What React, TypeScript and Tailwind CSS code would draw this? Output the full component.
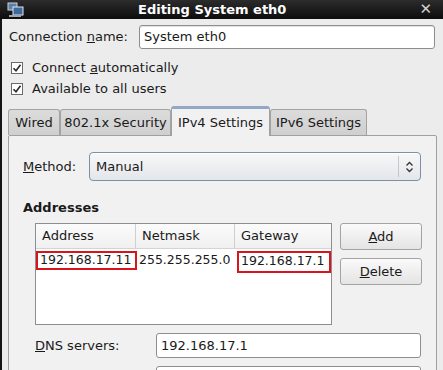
const font = { fontFamily: '"DejaVu Sans", "Liberation Sans", sans-serif' };

function Check({ label }: { label: React.ReactNode }) {
  return (
    <div className="flex items-center h-[21px] pl-[9px]">
      <svg width="12" height="12" viewBox="0 0 12 12" className="mr-[9px]">
        <rect x="0.5" y="0.5" width="11" height="11" fill="#fff" stroke="#6b6b6b" />
        <path d="M2.5 6.2 L5 8.8 L9.5 2.8" fill="none" stroke="#2a2a2a" strokeWidth="1.6" />
      </svg>
      <span>{label}</span>
    </div>
  );
}

function Tab({ label, active, w }: { label: string; active?: boolean; w: string }) {
  if (active) {
    return (
      <div className={`${w} h-[30px] -mb-px relative z-10 flex items-center justify-center bg-[#f1f1f1] border border-b-0 border-[#a0a0a0] rounded-t-[3px] border-t-[3px] border-t-[#93a8c6]`}>
        {label}
      </div>
    );
  }
  return (
    <div className={`${w} h-[26px] flex items-center justify-center bg-gradient-to-b from-[#dcdcdc] to-[#cfcfcf] border border-b-0 border-[#a3a3a3] rounded-t-[3px]`}>
      {label}
    </div>
  );
}

export default function App() {
  return (
    <div className="w-[443px] h-[370px] overflow-hidden bg-[#ececec] text-[13px] text-[#1a1a1a] flex flex-col" style={font}>
      {/* title bar */}
      <div className="h-[19px] shrink-0 bg-gradient-to-b from-[#2c2c2c] to-[#0d0d0d] flex items-center relative">
        <svg width="18" height="16" viewBox="0 0 18 16" className="ml-[7px]">
          <rect x="1" y="1" width="9" height="7" fill="#5d7fa6" stroke="#c9d3de" />
          <rect x="6" y="5" width="10" height="8" fill="#3d6a9a" stroke="#dfe6ee" />
          <rect x="2" y="13" width="12" height="2" fill="#9aa5b1" />
        </svg>
        <div className="flex-1 text-center text-white font-bold text-[13px] -ml-[20px] leading-none">Editing System eth0</div>
        <span className="mr-[11px] text-[#d0d0d0] font-bold text-[15px] leading-none">✕</span>
      </div>

      <div className="flex-1 flex flex-col border-l-[2px] border-[#151515]">
        {/* connection name */}
        <div className="flex items-center mt-[6px] pl-[7px] pr-[8px]">
          <span className="w-[130px]">Connection <u>n</u>ame:</span>
          <div className="flex-1 h-[24px] bg-white border border-[#8e8e8e] rounded-[3px] flex items-center px-[4px] shadow-[inset_0_1px_1px_rgba(0,0,0,0.12)]">
            System eth0
          </div>
        </div>

        <div className="mt-[8px]">
          <Check label={<>Connect <u>a</u>utomatically</>} />
          <Check label="Available to all users" />
        </div>

        {/* tabs */}
        <div className="flex items-end ml-[6px] mt-[8px] h-[28px] gap-0">
          <Tab label="Wired" w="w-[52px]" />
          <Tab label="802.1x Security" w="w-[111px]" />
          <Tab label="IPv4 Settings" w="w-[99px]" active />
          <Tab label="IPv6 Settings" w="w-[97px]" />
        </div>

        <div className="flex-1 ml-[6px] mr-[6px] bg-[#f1f1f1] border border-[#a0a0a0] rounded-[2px] pl-[14px] pr-[15px] pt-[16px]">
          {/* method */}
          <div className="flex items-center">
            <span className="w-[66px]"><u>M</u>ethod:</span>
            <div className="flex-1 h-[29px] rounded-[4px] border border-[#7f8fa6] bg-gradient-to-b from-[#f8f8f8] to-[#e3e6ea] flex items-center shadow-[inset_0_1px_0_#fff]">
              <span className="flex-1 pl-[6px]">Manual</span>
              <div className="w-px h-[21px] bg-[#c7c7c7]" />
              <svg width="21" height="14" viewBox="0 0 21 14">
                <path d="M7.5 5.5 L10.5 2.5 L13.5 5.5 M7.5 8.5 L10.5 11.5 L13.5 8.5" fill="none" stroke="#333" strokeWidth="1.3" />
              </svg>
            </div>
          </div>

          <div className="font-bold mt-[19px] leading-[16px]">Addresses</div>

          {/* address table + buttons */}
          <div className="flex mt-[7px] pl-[12px]">
            <div className="w-[297px] h-[102px] bg-white border border-[#8e8e8e] text-[12.5px]">
              <div className="flex h-[25px] border-b border-[#d4d4d4] bg-gradient-to-b from-[#fbfbfb] to-[#f0f0f0] text-[13px]">
                <div className="w-[100px] pl-[6px] flex items-center border-r border-[#cfcfcf]">Address</div>
                <div className="w-[99px] pl-[6px] flex items-center border-r border-[#cfcfcf]">Netmask</div>
                <div className="flex-1 pl-[6px] flex items-center">Gateway</div>
              </div>
              <div className="flex h-[22px] items-center">
                <div className="w-[101px] h-[19px] flex items-center pl-[2px] border-2 border-[#d8141c]">192.168.17.11</div>
                <div className="w-[100px] pl-[2px]">255.255.255.0</div>
                <div className="w-[94px] h-[22px] flex items-center pl-[2px] border-2 border-[#d8141c] mt-[3px]">192.168.17.1</div>
              </div>
            </div>
            <div className="flex flex-col ml-[8px] gap-[8px]">
              <div className="w-[82px] h-[27px] rounded-[3px] border border-[#a3a3a3] bg-gradient-to-b from-[#fafafa] to-[#e4e4e4] flex items-center justify-center">
                <span><u>A</u>dd</span>
              </div>
              <div className="w-[82px] h-[27px] rounded-[3px] border border-[#a3a3a3] bg-gradient-to-b from-[#fafafa] to-[#e4e4e4] flex items-center justify-center">
                <span><u>D</u>elete</span>
              </div>
            </div>
          </div>

          {/* dns */}
          <div className="flex items-center mt-[8px] pl-[12px]">
            <span className="w-[121px]"><u>D</u>NS servers:</span>
            <div className="flex-1 h-[25px] bg-white border border-[#8e8e8e] rounded-[3px] flex items-center px-[4px]">
              192.168.17.1
            </div>
          </div>
          <div className="flex mt-[8px] pl-[133px]">
            <div className="flex-1 h-[25px] bg-white border border-[#8e8e8e] rounded-[3px]" />
          </div>
        </div>
      </div>
    </div>
  );
}
